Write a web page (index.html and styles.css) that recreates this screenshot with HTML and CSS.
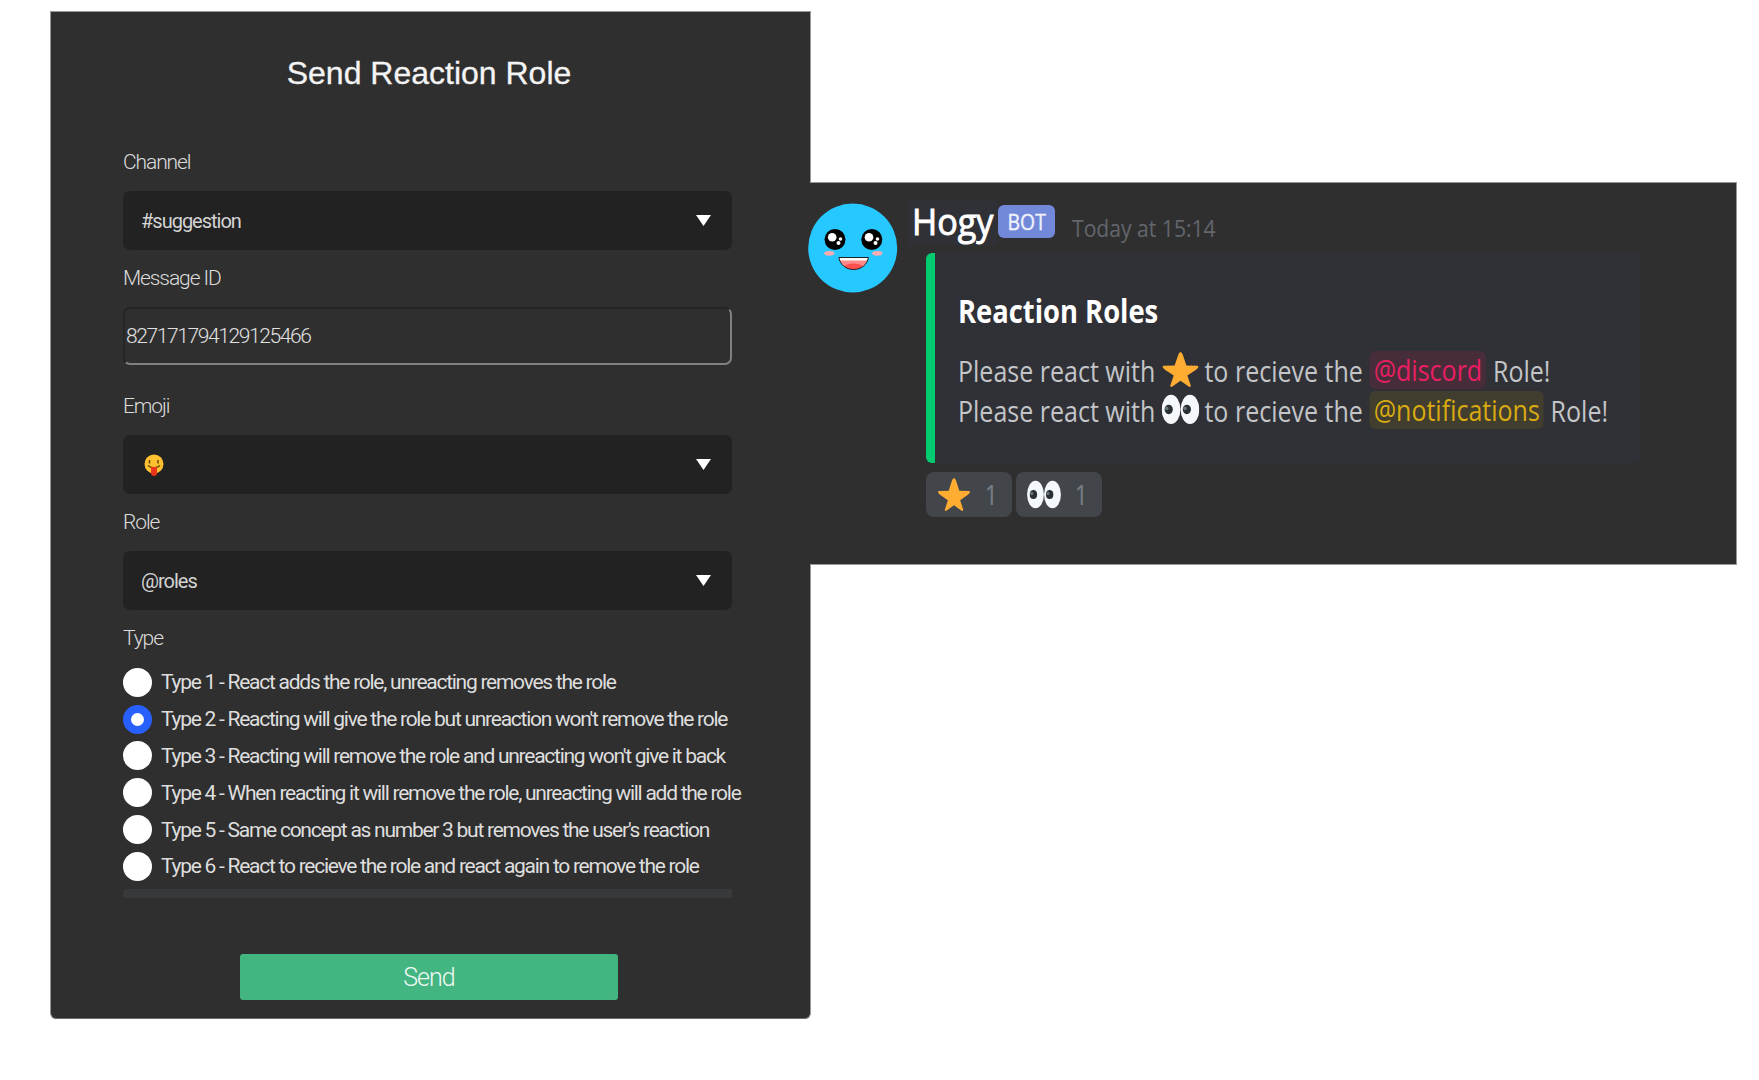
FILE: index.html
```
<!DOCTYPE html>
<html lang="en">
<head>
<meta charset="utf-8">
<title>Reaction Roles</title>
<link rel="stylesheet" href="styles.css">
</head>
<body>
<svg class="sprite" aria-hidden="true">
  <symbol id="star" viewBox="0 0 36 36" preserveAspectRatio="none"><path fill="#ffac33" d="M27.3 34.8c-.3.2-.9.2-1.2 0L18 28.800l-8.100 6c-.4.2-.8.2-1.200 0-.4-.3-.5-.8-.4-1.200L11.500 23.600 3.300 17.800C2.900 17.400 1 15.700 1 14.500c.2-.5.6-.8 1.200-.8l10.200-.1L15.700 3.200C15.900 2.600 17 0 18 0s2.100 2.600 2.300 3.200l3.300 10.400 10.200.1c.6 0 1 .3 1.200.8 0 1.200-1.900 2.900-2.300 3.300l-8.200 5.800 3.200 9.800c.2.500 0 1-.4 1.400z"/></symbol>
  <symbol id="eyes" viewBox="0 0 36 34" preserveAspectRatio="none"><g fill="#f5f8fa"><ellipse cx="9" cy="16.500" rx="8.900" ry="13.800"/><ellipse cx="27" cy="16.500" rx="8.900" ry="13.800"/></g><g fill="#292f33"><ellipse cx="6.800" cy="16.500" rx="3.900" ry="4.500"/><ellipse cx="24" cy="16.500" rx="3.900" ry="4.500"/></g><g fill="#66757f"><circle cx="5" cy="15.500" r="1.700"/><circle cx="22.200" cy="15.500" r="1.700"/></g></symbol>
</svg>
<main class="page">
  <form class="panel">
    <h1 class="title">Send Reaction Role</h1>
    <div class="field"><label class="label">Channel</label>
      <div class="select"><span class="value">#suggestion</span><i class="arrow"></i></div></div>
    <div class="field field-id"><label class="label">Message ID</label>
      <div class="input">827171794129125466</div></div>
    <div class="field"><label class="label">Emoji</label>
      <div class="select"><svg class="face" viewBox="0 0 20 22"><circle cx="10" cy="10" r="9.500" fill="#ffc130"/><path d="M5.500 6v3.500M14 6v3.500M4 11.500c3 3 9 3 12 0" stroke="#664500" stroke-width="1.500" fill="none"/><path d="M7 13h6v6a3 3 0 0 1-6 0z" fill="#e8351c"/></svg><i class="arrow"></i></div></div>
    <div class="field"><label class="label">Role</label>
      <div class="select"><span class="value">@roles</span><i class="arrow"></i></div></div>
    <div class="label">Type</div>
    <div class="options">
      <label class="option"><i class="radio"></i><span>Type 1 - React adds the role, unreacting removes the role</span></label>
      <label class="option"><i class="radio on"></i><span>Type 2 - Reacting will give the role but unreaction won't remove the role</span></label>
      <label class="option"><i class="radio"></i><span>Type 3 - Reacting will remove the role and unreacting won't give it back</span></label>
      <label class="option"><i class="radio"></i><span>Type 4 - When reacting it will remove the role, unreacting will add the role</span></label>
      <label class="option"><i class="radio"></i><span>Type 5 - Same concept as number 3 but removes the user's reaction</span></label>
      <label class="option"><i class="radio"></i><span>Type 6 - React to recieve the role and react again to remove the role</span></label>
    </div>
    <div class="divider"></div>
    <button class="send" type="button">Send</button>
  </form>
  <section class="message">
    <svg class="avatar" viewBox="0 0 90 90"><circle cx="44.700" cy="45" r="44.500" fill="#26c9ff"/>
      <circle cx="27" cy="36.500" r="10.500"/><circle cx="63.800" cy="36.500" r="10.500"/>
      <g fill="#fff"><circle cx="24.200" cy="34.300" r="4.300"/><circle cx="32.500" cy="36" r="1.800"/><circle cx="30.500" cy="40" r="2"/><circle cx="61" cy="34.300" r="4.300"/><circle cx="69.500" cy="36" r="1.800"/><circle cx="67.500" cy="40" r="2"/></g>
      <g fill="#ffabb0"><ellipse cx="21.300" cy="50.300" rx="5" ry="2.400"/><ellipse cx="69.300" cy="50.300" rx="5" ry="2.400"/></g>
      <g transform="translate(-.6)"><path d="M31.500 54.500h29.500c-1 7-7 12-14.800 12s-13.700-5-14.700-12z" fill="#ff8a8a"/><path d="M37 63.500c2-4 16-4 18.500 0-5 4-13.500 4-18.500 0z" fill="#ff5050"/><path d="M32 55h28.500l-.8 2.500H33z" fill="#fff"/><path d="M31.500 54.500h29.500c-1 7-7 12-14.800 12s-13.700-5-14.700-12z" fill="none" stroke="#111" stroke-width=".9"/></g></svg>
    <div class="content">
      <header class="head"><div class="name"><span class="name-text">Hogy</span></div><div class="bot"><span class="bot-text">BOT</span></div><time class="time">Today at 15:14</time></header>
      <article class="embed">
        <h2 class="embed-title">Reaction Roles</h2>
        <p class="line"><span>Please react with</span><svg class="emoji"><use href="#star"/></svg><span>to recieve the</span><span class="mention red">@discord</span><span>Role!</span></p>
        <p class="line"><span>Please react with</span><svg class="emoji"><use href="#eyes"/></svg><span>to recieve the</span><span class="mention gold">@notifications</span><span>Role!</span></p>
      </article>
      <div class="reactions"><span class="reaction"><svg class="remoji"><use href="#star"/></svg><span>1</span></span><span class="reaction"><svg class="remoji"><use href="#eyes"/></svg><span>1</span></span></div>
    </div>
  </section>
</main>
</body>
</html>
```
FILE: styles.css
```
* { box-sizing: border-box; }
body { margin: 0; background: #fff; font-family: Roboto, sans-serif; }
h1, h2, p { margin: 0; font-weight: 400; }
.sprite { position: absolute; width: 0; height: 0; }
.page { display: flex; align-items: flex-start; height: 1080px; padding: 11px 0 0 50px; }

.panel { width: 761px; height: 1008px; flex: none; padding: 43px 78px 0 72px; background: #2f2f2f; border: 1px solid #979797; border-bottom-color: #6c6c6c; border-radius: 0 0 6px 6px; }
.title { height: 36px; margin-bottom: 59px; padding-left: 3px; font: 32px/36px "Liberation Sans", sans-serif; text-align: center; color: #f4f4f4; -webkit-text-stroke: .3px #f4f4f4; }
.field { width: 609px; margin-bottom: 16px; }
.field-id { margin-bottom: 29px; }
.label { display: block; height: 24px; font-size: 21px; font-weight: 300; line-height: 24px; color: #dcdcdc; letter-spacing: -1.1px; }
.select, .input { display: flex; align-items: center; height: 59px; margin-top: 17px; border-radius: 7px; }
.select { justify-content: space-between; padding: 0 21px 0 18px; background: #222; }
.value { font-size: 20px; letter-spacing: -1px; color: #d4d4d4; }
.arrow { width: 15px; height: 11px; background: #fff; clip-path: polygon(0 0, 100% 0, 50% 100%); }
.input { height: 58px; padding: 0 0 1px 1px; border: 2px solid #262626; border-right-color: #808080; border-bottom-color: #808080; font-size: 21px; line-height: 24px; font-weight: 300; color: #e0e0e0; letter-spacing: -1.4px; }
.face { width: 20px; height: 22px; margin-left: 3px; }
.options { margin-top: 14px; white-space: nowrap; }
.option { display: flex; align-items: center; gap: 9px; height: 36.8px; font-size: 21px; line-height: 24px; color: #dedede; letter-spacing: -1.26px; }
.radio { flex: none; width: 29px; height: 29px; border-radius: 50%; background: #fff; }
.radio.on { border: 8px solid #2860ff; }
.divider { width: 609px; height: 9px; margin-top: 4px; background: #38393b; border-radius: 4px 0 0 4px; }
.send { display: block; width: 378px; height: 46px; margin: 56px 0 0 117px; padding: 0; border: 0; border-radius: 3px; background: #43b581; color: #eef8f3; font: 300 25px/48px Roboto, sans-serif; letter-spacing: -1px; text-align: center; }

.message { display: flex; width: 927px; height: 383px; margin: 171px 0 0 -1px; padding-top: 17px; background: #2f2f2f; border: 1px solid #979797; border-left: 0; font-family: "Open Sans", sans-serif; white-space: nowrap; }
.avatar { flex: none; width: 90px; height: 90px; margin: 3px 0 0 -2px; }
.content { margin-left: 10px; }
.head { display: flex; height: 45px; align-items: flex-start; }
.name { width: 89px; height: 45px; padding-left: 4px; background: #303136; color: #fff; font-size: 36px; line-height: 43px; font-weight: 500; }
.name-text { display: inline-block; transform: scaleX(.95); transform-origin: left; -webkit-text-stroke: .9px #fff; }
.bot { width: 57px; height: 33px; margin: 5px 0 0 1px; background: #7289da; border-radius: 6px; color: #f0f2fb; font-size: 22px; font-weight: 500; line-height: 33px; text-align: center; }
.bot-text { display: inline-block; transform: scaleX(.88); -webkit-text-stroke: .4px #f0f2fb; }
.time { margin: 12px 0 0 17px; font-size: 24px; line-height: 32px; color: #63666c; transform: scaleX(.88); transform-origin: left; }
.embed { width: 715px; height: 210px; margin: 8px 0 0 18px; padding: 36px 0 0 23px; background: #303136; border-left: 9px solid #00cb70; border-radius: 6px; }
.embed-title { height: 44px; margin-bottom: 17px; font-size: 32px; line-height: 44px; font-weight: 700; color: #fff; transform: scaleX(.855); transform-origin: left; }
.line { display: flex; align-items: center; height: 40px; font-size: 29px; color: #c3c5c8; transform: scaleX(.8625); transform-origin: left; }
.line > * { flex: none; }
.emoji { width: 44px; height: 36px; margin: 0 6px 0 7px; }
.mention { height: 38px; line-height: 38px; border-radius: 7px / 6px; margin: 0 8px; padding: 0 4.5px; }
.red { background: #462d39; color: #e91e63; }
.gold { background: #413d2f; color: #d9ab10; }
.reactions { display: flex; gap: 4px; margin: 9px 0 0 18px; }
.reaction { display: flex; align-items: center; gap: 14px; width: 86px; height: 45px; padding-left: 11px; border-radius: 8px; background: #42454a; font-size: 27px; font-stretch: 75%; color: #777b82; }
.remoji { width: 34px; height: 34px; }
```
